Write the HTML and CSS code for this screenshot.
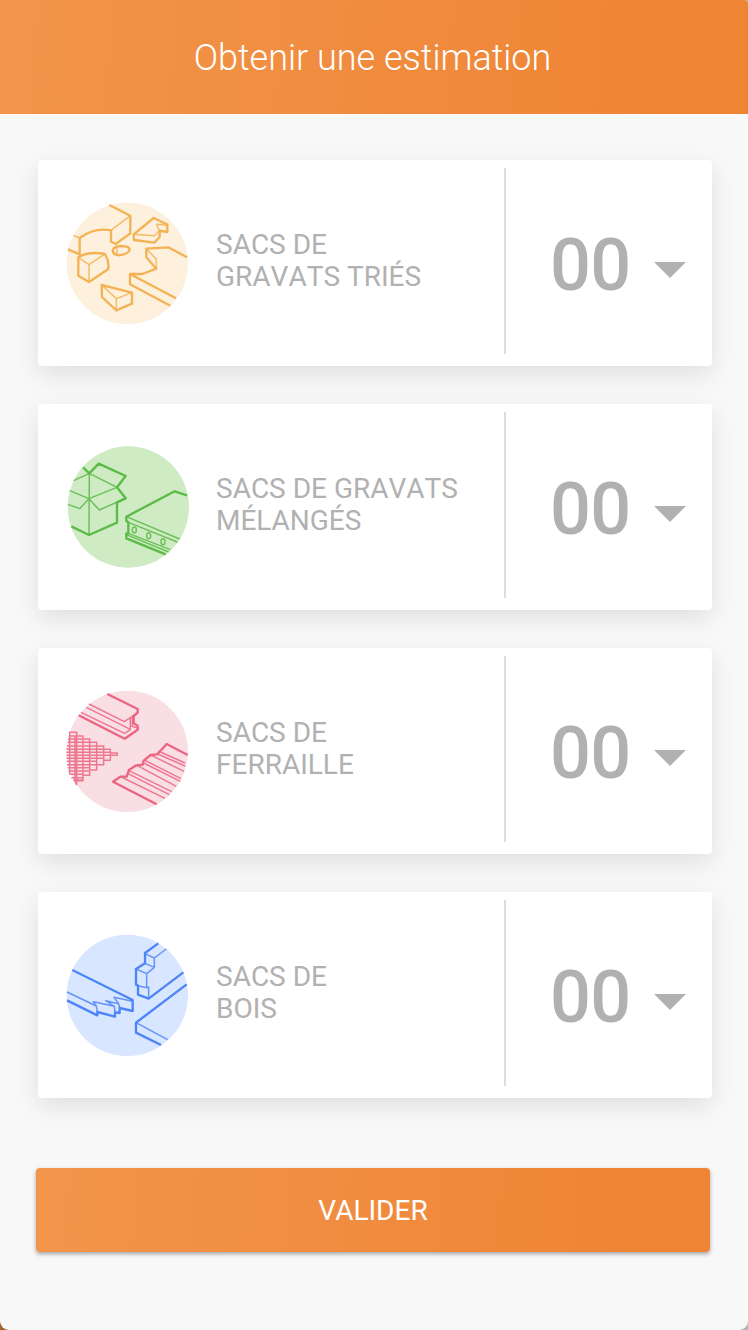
FILE: index.html
```html
<!DOCTYPE html>
<html lang="fr">
<head>
<meta charset="utf-8">
<title>Obtenir une estimation</title>
<link rel="stylesheet" href="styles.css">
</head>
<body>
<div class="screen">
  <header class="topbar"><h1 class="title">Obtenir une estimation</h1></header>
  <main class="list">
    <section class="card">
      <svg class="icon sorted" viewBox="0 0 426 426">
        <circle class="disc" cx="211" cy="211" r="182"/>
        <path class="bold" d="M157 36L220 68V121L176 153L162 146V112Q112 102 68 135V184L33 169M64 193Q94 174 144 183Q158 207 153 229L96 267L64 248ZM167 172Q170 160 194 159Q219 160 218 171Q214 183 186 187Q168 186 167 172ZM230 124L290 75L331 95V117L308 113V132L292 149L231 141ZM390 193L334 163L268 167V193L298 227L256 243H219V274L340 338M219 243L357 316M134 276L225 299V332L178 352L135 312Z"/>
        <path class="fine" d="M220 68L162 112M68 135L49 127M64 193L96 215L144 183M96 215V267M180 161V186M230 124L292 128L307 113L299 94L331 97M268 167L298 199V227M134 276L178 317L225 299M178 317V352"/>
      </svg>
      <h2 class="label">SACS DE<br>GRAVATS TRIÉS</h2>
      <div class="picker"><span class="count">00</span><span class="arrow"></span></div>
    </section>
    <section class="card">
      <svg class="icon mixed" viewBox="0 0 426 426">
        <circle class="disc" cx="214" cy="210" r="182"/>
        <path class="bold" d="M78 91L97 109L125 80L206 117L180 151L206 184L180 196V257L96 294L43 268M390 175L353 163L208 239V252L214 256V289H208V304L326 352"/>
        <path class="fine" d="M97 109L50 131M97 109L180 151L96 185L38 161M97 109L96 294M96 185L68 215L33 202M96 185L127 219L206 184M208 239L368 306M214 256L361 315M214 289L340 338M208 293L335 345"/>
        <ellipse class="fine" cx="232" cy="279" rx="6" ry="9"/><ellipse class="fine" cx="275" cy="296" rx="6" ry="9"/><ellipse class="fine" cx="318" cy="314" rx="6" ry="9"/>
      </svg>
      <h2 class="label">SACS DE GRAVATS<br>MÉLANGÉS</h2>
      <div class="picker"><span class="count">00</span><span class="arrow"></span></div>
    </section>
    <section class="card">
      <svg class="icon metal" viewBox="0 0 426 426">
        <circle class="disc" cx="211" cy="211" r="182"/>
        <path class="bold" d="M151 39L242 84V95L230 105V127L242 134V146L203 173L65 103M392 222L329 189L301 220L281 222L260 239L257 251L238 253L216 267L209 287L190 287L168 302L299 370"/>
        <path class="fine" d="M96 69L202 122L242 95M88 79L220 145V112M72 94L203 157L220 146M226 107V136L242 141M304 210L384 246M302 219L384 255M283 223L381 271M262 237L372 293M260 246L370 301M240 253L358 316M216 269L344 332M213 278L337 341M193 288L324 352"/>
        <path class="fine" d="M37 154H59V311L54 301V165H78V299H53M38 154V280M78 174H98V283H78M98 184H119V267H98M119 195H140V251H119M140 205H160V238H140M160 216H181V223H160M37 165H59M33 174H78M32 184H98M30 195H119M28 205H140M28 214H160M28 223H160M28 232H140M29 241H119M30 251H119M32 260H98M34 270H98M37 280H78M43 290H78M48 297H78"/>
      </svg>
      <h2 class="label">SACS DE<br>FERRAILLE</h2>
      <div class="picker"><span class="count">00</span><span class="arrow"></span></div>
    </section>
    <section class="card">
      <svg class="icon wood" viewBox="0 0 426 426">
        <circle class="disc" cx="211" cy="211" r="182"/>
        <path class="bold" d="M46 135L227 225V258L188 249V264L174 262V275L121 261V271L30 226M304 55L264 84V115L237 132V179L243 182V209L275 221L379 142M389 178L237 293V323L312 360"/>
        <path class="fine" d="M30 201L118 243L109 230L172 244L174 262M118 243L121 261M172 244L146 227L185 236L188 249M185 236L171 217L227 229M328 72L292 99L264 86M292 99V127L269 146L237 132M264 115L292 127M269 146V188L243 182M269 188L275 186V221M237 293L332 344"/>
      </svg>
      <h2 class="label">SACS DE<br>BOIS</h2>
      <div class="picker"><span class="count">00</span><span class="arrow"></span></div>
    </section>
  </main>
  <button class="submit" type="button">VALIDER</button>
</div>
</body>
</html>
```
FILE: styles.css
```css
* { box-sizing: border-box; }
body {
  margin: 0;
  background: linear-gradient(90deg, #a8622c 50%, #b5b5b5 50%);
  font-family: Roboto, "Liberation Sans", sans-serif;
}
.screen {
  height: 1330px;
  background: #f8f8f8;
  border-radius: 0 4px 9px 9px;
  overflow: hidden;
}
.topbar {
  height: 114px;
  padding-top: 2px;
  display: flex;
  align-items: center;
  justify-content: center;
  background: linear-gradient(95deg, #f2954a, #ef8435 90%);
}
.title {
  margin: 0;
  padding-right: 3px;
  color: #fff;
  font-size: 36px;
  font-weight: 300;
  line-height: 42px;
}
.list {
  display: flex;
  flex-direction: column;
  gap: 38px;
  padding: 46px 36px 0 38px;
}
.card {
  display: flex;
  align-items: flex-start;
  height: 206px;
  padding: 8px 0 12px 19px;
  background: #fff;
  border-radius: 4px;
  box-shadow: 0 8px 24px rgba(0, 0, 0, 0.1);
}
.icon {
  width: 142px;
  height: 142px;
  margin-top: 25px;
  flex: none;
  fill: none;
  stroke-linejoin: round;
}
.disc { stroke: none; }
.bold { stroke-width: 7; }
.fine { stroke-width: 4.5; stroke-opacity: 0.85; }
.sorted { stroke: #f3b354; }
.sorted .disc { fill: #fdf0dc; }
.mixed { stroke: #5cba47; }
.mixed .disc { fill: #ceebc4; }
.metal { stroke: #eb6581; }
.metal .disc { fill: #f9dfe4; }
.wood { stroke: #4d85f7; }
.wood .disc { fill: #d9e6ff; }
.label {
  flex: 1;
  margin: 61px 0 0 17px;
  color: #b1b1b1;
  font-size: 28px;
  font-weight: 400;
  font-kerning: none;
  line-height: 32px;
}
.picker {
  display: flex;
  align-items: center;
  align-self: stretch;
  width: 208px;
  padding: 10px 0 0 44px;
  border-left: 2px solid #dcdcdc;
}
.count {
  color: #b1b1b1;
  font-size: 72px;
  font-weight: 500;
  letter-spacing: -0.7px;
  line-height: 84px;
}
.arrow {
  margin: 8px 0 0 24px;
  border: 16px solid transparent;
  border-top-color: #b1b1b1;
  border-bottom: 0;
}
.submit {
  display: block;
  width: 674px;
  height: 84px;
  margin: 70px 0 0 36px;
  padding: 2px 0 0;
  border: 0;
  border-radius: 4px;
  background: linear-gradient(95deg, #f2954a, #ef8435 90%);
  box-shadow: 0 2px 4px rgba(0, 0, 0, 0.35);
  color: #fff;
  font: 400 28px/32px Roboto, "Liberation Sans", sans-serif;
}
```
